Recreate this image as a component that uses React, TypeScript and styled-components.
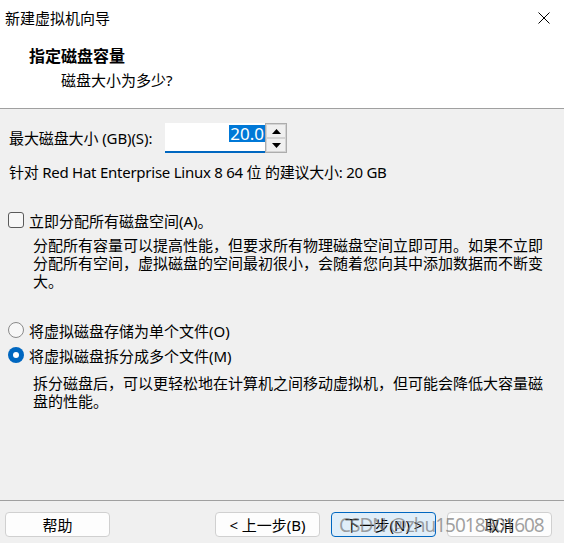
import React from "react";
import styled, { createGlobalStyle, css } from "styled-components";

const GlobalStyle = createGlobalStyle`
  html, body {
    margin: 0;
    padding: 0;
    background: #f0f0f0;
  }
  * { box-sizing: border-box; }
`;

const FONT = `"Noto Sans", "Noto Sans CJK SC", sans-serif`;

const Window = styled.div`
  position: relative;
  width: 564px;
  height: 543px;
  display: flex;
  flex-direction: column;
  background: #f0f0f0;
  font-family: ${FONT};
  font-size: 15px;
  color: #000;
  overflow: hidden;
`;

const Header = styled.header`
  background: #ffffff;
  height: 109px;
  border-bottom: 1px solid #a0a0a0;
  display: flex;
  flex-direction: column;
`;

const TitleBar = styled.div`
  height: 36px;
  display: flex;
  align-items: center;
  justify-content: space-between;
  padding: 0 14px 0 5px;
`;

const TitleText = styled.span`
  font-size: 15px;
  line-height: 20px;
`;

const CloseButton = styled.button`
  width: 12px;
  height: 12px;
  padding: 0;
  border: none;
  background: transparent;
  display: flex;
`;

const HeaderTitle = styled.h1`
  margin: 10px 0 0 29px;
  font-size: 16px;
  line-height: 20px;
  font-weight: 700;
`;

const HeaderSub = styled.div`
  margin: 4px 0 0 61px;
  font-size: 15px;
  line-height: 20px;
`;

const Body = styled.main`
  flex: 1;
  display: flex;
  flex-direction: column;
  padding: 14px 16px 0 9px;
`;

const SizeRow = styled.div`
  display: flex;
  align-items: center;
  height: 30px;
`;

const SizeLabel = styled.label`
  width: 156px;
  line-height: 20px;
  white-space: nowrap;
  letter-spacing: -0.1px;
`;

const SpinBox = styled.div`
  display: flex;
  height: 30px;
`;

const NumberField = styled.div`
  width: 100px;
  height: 30px;
  background: #ffffff;
  border-bottom: 2px solid #0067c0;
  display: flex;
  justify-content: flex-end;
  align-items: flex-start;
  padding-top: 2px;
`;

const Selected = styled.span`
  background: #0078d7;
  color: #ffffff;
  font-size: 17px;
  line-height: 17px;
  height: 17px;
  padding: 0 1px;
`;

const SpinButtons = styled.div`
  width: 22px;
  height: 30px;
  border: 1px solid #adadad;
  display: flex;
  flex-direction: column;
`;

const SpinButton = styled.button`
  flex: 1;
  padding: 0;
  margin: 0;
  border: 1px solid #d4d4d4;
  background: #f0f0f0;
  display: flex;
  align-items: center;
  justify-content: center;
`;

const Hint = styled.p`
  margin: 10px 0 0;
  line-height: 18px;
  letter-spacing: -0.25px;
`;

const OptionRow = styled.label<{ $gap: number }>`
  display: flex;
  align-items: center;
  gap: 5px;
  height: 20px;
  margin-top: ${(p) => p.$gap}px;
  margin-left: -1px;
`;

const CheckBox = styled.span`
  width: 16px;
  height: 16px;
  border: 1px solid #5a5a5a;
  border-radius: 3px;
  background: #f7f7f7;
  flex: none;
`;

const Radio = styled.span<{ $checked?: boolean }>`
  width: 16px;
  height: 16px;
  border-radius: 50%;
  flex: none;
  ${(p) =>
    p.$checked
      ? css`
          background: #0067c0;
          display: flex;
          align-items: center;
          justify-content: center;
          &::after {
            content: "";
            width: 6px;
            height: 6px;
            border-radius: 50%;
            background: #ffffff;
          }
        `
      : css`
          border: 1px solid #8a8a8a;
          background: #f7f7f7;
        `}
`;

const Description = styled.p<{ $gap: number }>`
  margin: ${(p) => p.$gap}px 0 0 24px;
  line-height: 18px;
`;

const Footer = styled.footer`
  height: 43px;
  border-top: 1px solid #a0a0a0;
  display: flex;
  align-items: flex-start;
  padding: 11px 12px 0 5px;
`;

const Button = styled.button<{ $primary?: boolean }>`
  width: 105px;
  height: 25px;
  font-family: ${FONT};
  font-size: 15px;
  line-height: 20px;
  color: #000;
  padding: 0;
  border-radius: 4px;
  border: 1px solid ${(p) => (p.$primary ? "#0067c0" : "#d0d0d0")};
  background: ${(p) => (p.$primary ? "#e0eef9" : "#fdfdfd")};
`;

const Spacer = styled.div`
  flex: 1;
`;

const ButtonGroup = styled.div`
  display: flex;
  gap: 11px;
`;

const Watermark = styled.div`
  position: absolute;
  left: 339px;
  top: 512px;
  font-family: "Noto Sans", sans-serif;
  font-size: 19px;
  line-height: 26px;
  letter-spacing: -1px;
  color: rgba(120, 120, 120, 0.7);
  white-space: nowrap;
  pointer-events: none;
`;

const Arrow = ({ up }: { up?: boolean }) => (
  <svg width="9" height="5" viewBox="0 0 9 5">
    <path d={up ? "M0 5 L4.5 0 L9 5 Z" : "M0 0 L4.5 5 L9 0 Z"} fill="#000" />
  </svg>
);

export default function App() {
  return (
    <>
      <GlobalStyle />
      <Window>
        <Header>
          <TitleBar>
            <TitleText>新建虚拟机向导</TitleText>
            <CloseButton aria-label="关闭">
              <svg width="12" height="12" viewBox="0 0 12 12">
                <path d="M0.5 0.5 L11.5 11.5 M11.5 0.5 L0.5 11.5" stroke="#000" strokeWidth="1" />
              </svg>
            </CloseButton>
          </TitleBar>
          <HeaderTitle>指定磁盘容量</HeaderTitle>
          <HeaderSub>磁盘大小为多少?</HeaderSub>
        </Header>
        <Body>
          <SizeRow>
            <SizeLabel>最大磁盘大小 (GB)(S):</SizeLabel>
            <SpinBox>
              <NumberField>
                <Selected>20.0</Selected>
              </NumberField>
              <SpinButtons>
                <SpinButton aria-label="增加">
                  <Arrow up />
                </SpinButton>
                <SpinButton aria-label="减少">
                  <Arrow />
                </SpinButton>
              </SpinButtons>
            </SpinBox>
          </SizeRow>
          <Hint>针对 Red Hat Enterprise Linux 8 64 位 的建议大小: 20 GB</Hint>
          <OptionRow $gap={29}>
            <CheckBox />
            <span>立即分配所有磁盘空间(A)。</span>
          </OptionRow>
          <Description $gap={6}>
            分配所有容量可以提高性能，但要求所有物理磁盘空间立即可用。如果不立即分配所有空间，虚拟磁盘的空间最初很小，会随着您向其中添加数据而不断变大。
          </Description>
          <OptionRow $gap={30}>
            <Radio />
            <span>将虚拟磁盘存储为单个文件(O)</span>
          </OptionRow>
          <OptionRow $gap={5}>
            <Radio $checked />
            <span>将虚拟磁盘拆分成多个文件(M)</span>
          </OptionRow>
          <Description $gap={9}>
            拆分磁盘后，可以更轻松地在计算机之间移动虚拟机，但可能会降低大容量磁盘的性能。
          </Description>
        </Body>
        <Footer>
          <Button>帮助</Button>
          <Spacer />
          <ButtonGroup>
            <Button>&lt; 上一步(B)</Button>
            <Button $primary>下一步(N) &gt;</Button>
            <Button>取消</Button>
          </ButtonGroup>
        </Footer>
        <Watermark>CSDN @zhu15018801608</Watermark>
      </Window>
    </>
  );
}
